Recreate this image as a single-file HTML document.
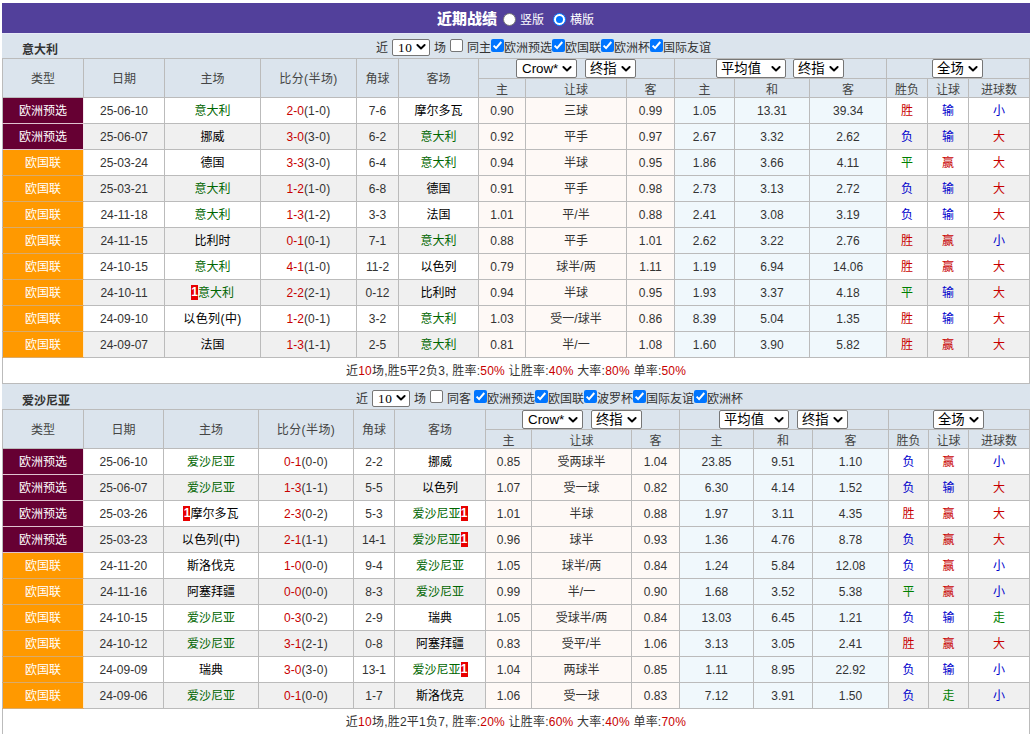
<!DOCTYPE html>
<html lang="zh-CN">
<head>
<meta charset="utf-8">
<title>近期战绩</title>
<style>
html,body{margin:0;padding:0;background:#fff;}
body{width:1032px;height:734px;overflow:hidden;font-family:"Liberation Sans","Noto Sans CJK SC",sans-serif;font-size:12px;color:#333;}
#wrap{position:absolute;left:2px;top:3px;width:1028px;}
.title{position:relative;height:30px;width:1028px;background:#52409b;color:#fff;}
.title .tt{position:absolute;left:435px;top:1px;line-height:30px;font-size:15px;font-weight:900;}
.title .rl{position:absolute;top:1px;line-height:32px;font-size:12px;}
.title .l1{left:518px;}
.title .l2{left:568px;}
.rd{position:absolute;top:10px;width:11px;height:11px;border:1px solid #767676;border-radius:50%;background:#fff;}
.rd.r1{left:501px;}
.rd.r2{left:551px;}
.rd.on{border-color:#0075ff;}
.rd.on:after{content:"";position:absolute;left:2px;top:2px;width:7px;height:7px;border-radius:50%;background:#0075ff;}
.team{position:relative;height:25px;width:1028px;background:#dbe4ed;}
.title + .team{box-shadow:inset 0 1px 0 #e6e9f7;}
.team .tn{position:absolute;left:20px;top:0;line-height:34px;font-size:12px;font-weight:bold;color:#333;}
.ctl{position:absolute;top:0;height:25px;white-space:nowrap;font-size:0;line-height:25px;}
.ctl>*{vertical-align:top;}
.ctl .tx,.ctl .lg{display:inline-block;font-size:12px;line-height:31px;color:#333;}
.ctl .lg{margin:0;}
.sel{display:inline-block;position:relative;box-sizing:border-box;height:19px;border:1px solid #767676;border-radius:2px;background:#fff;text-align:left;vertical-align:top;}
.sel .st{position:absolute;left:5px;top:0;line-height:17px;font-size:13.33px;color:#000;white-space:nowrap;}
.sel .ch{position:absolute;right:4px;top:6px;}
.ctl .sel{margin:6px 4px 0 4px;height:17px;}
.ctl .sel .st{font-family:"Liberation Serif","Noto Serif CJK SC",serif;line-height:15px;left:5px;letter-spacing:0.5px;}
.ctl .sel .ch{right:3px;top:4px;}
.cb{display:inline-block;box-sizing:border-box;width:13px;height:13px;border:1px solid #767676;border-radius:2px;background:#fff;margin-top:6px;position:relative;}
.cb.on{border:0;background:#0075ff;}
.cb svg{position:absolute;left:0;top:0;}
.ctl .cb.first{margin-left:4px;margin-right:4px;}
table{border-collapse:collapse;table-layout:fixed;width:1028px;margin:0;}
th,td{border:1px solid #bbb;padding:0;text-align:center;font-weight:normal;font-size:12px;overflow:hidden;white-space:nowrap;}
th{background:#dbe4ed;color:#444;}
th.bf{letter-spacing:0.4px;}
tr.h1{height:20px;}
tr.h1 th[rowspan]{padding-bottom:2px;}
tr.h2{height:19px;}
tr.h1 th.sc{font-size:0;line-height:0;vertical-align:top;text-align:left;}
tr.h1 th.sc .sel{margin-top:0;}


tr.a,tr.z,tr.su{height:26px;}
td{line-height:23px;height:23px;padding-top:2px;}
tr.a td{background:#fff;}
tr.z td{background:#f0f0f0;}
tr td.hc{background:#fef9f6;}
tr td.av{background:#f0f8fc;}
tr td.ty{color:#fff;}
tr td.ty.m{background:#660033;border-right-color:#f3e6ec;border-bottom-color:#dfc3d0;}
tr td.ty.o{background:#ff9900;border-right-color:#fbe9d0;border-bottom-color:#d9ab6c;}
tr.su td{background:#fff;letter-spacing:0.23px;}
.g{color:#006600;}
.r,td.r{color:#c80000;}
.ht{letter-spacing:0.25px;}
td.b{color:#0000cc;}
td.g{color:#008000;}
i.rc{font-style:normal;font-weight:bold;color:#fff;background:#e80000;display:inline-block;line-height:15px;height:15px;width:7px;text-align:center;vertical-align:middle;margin-top:-3px;}
.pl{letter-spacing:0.4px;}
.sel.cj .st{left:4px;}
td.tm{color:#000;}

</style>
</head>
<body>
<div id="wrap">
<div class="title"><b class="tt">近期战绩</b><span class="rd r1"></span><span class="rl l1">竖版</span><span class="rd on r2"></span><span class="rl l2">横版</span></div>
<div class="team"><b class="tn">意大利</b><div class="ctl" style="left:374px">
<span class="tx">近</span><span class="sel s10" style="width:38px;margin-left:4px"><span class="st">10</span><svg class="ch" viewBox="0 0 10 6" width="10" height="6"><path d="M1.4 1 L5 4.5 L8.6 1" fill="none" stroke="#000" stroke-width="1.9" stroke-linecap="round" stroke-linejoin="round"/></svg></span><span class="tx">场</span><span class="cb first"></span><span class="tx sm">同主</span>
<span class="cb on"><svg viewBox="0 0 13 13" width="13" height="13"><path d="M2.6 6.6 L5.1 9.1 L10.3 3" fill="none" stroke="#fff" stroke-width="2" stroke-linecap="butt" stroke-linejoin="miter"/></svg></span><span class="lg">欧洲预选</span>
<span class="cb on"><svg viewBox="0 0 13 13" width="13" height="13"><path d="M2.6 6.6 L5.1 9.1 L10.3 3" fill="none" stroke="#fff" stroke-width="2" stroke-linecap="butt" stroke-linejoin="miter"/></svg></span><span class="lg">欧国联</span>
<span class="cb on"><svg viewBox="0 0 13 13" width="13" height="13"><path d="M2.6 6.6 L5.1 9.1 L10.3 3" fill="none" stroke="#fff" stroke-width="2" stroke-linecap="butt" stroke-linejoin="miter"/></svg></span><span class="lg">欧洲杯</span>
<span class="cb on"><svg viewBox="0 0 13 13" width="13" height="13"><path d="M2.6 6.6 L5.1 9.1 L10.3 3" fill="none" stroke="#fff" stroke-width="2" stroke-linecap="butt" stroke-linejoin="miter"/></svg></span><span class="lg">国际友谊</span>
</div></div>
<table class="t1"><colgroup><col style="width:81px"><col style="width:81px"><col style="width:96px"><col style="width:96px"><col style="width:42px"><col style="width:80px"><col style="width:47px"><col style="width:101px"><col style="width:48px"><col style="width:60px"><col style="width:75px"><col style="width:77px"><col style="width:41px"><col style="width:41px"><col style="width:61px"></colgroup>
<tr class="h1"><th rowspan="2">类型</th><th rowspan="2">日期</th><th rowspan="2">主场</th><th rowspan="2" class="bf">比分(半场)</th><th rowspan="2">角球</th><th rowspan="2">客场</th><th colspan="3" class="sc" style="padding-left:37px"><span class="sel " style="width:61px;margin-left:0px"><span class="st">Crow*</span><svg class="ch" viewBox="0 0 10 6" width="10" height="6"><path d="M1.4 1 L5 4.5 L8.6 1" fill="none" stroke="#000" stroke-width="1.9" stroke-linecap="round" stroke-linejoin="round"/></svg></span><span class="sel cj" style="width:51px;margin-left:8px"><span class="st">终指</span><svg class="ch" viewBox="0 0 10 6" width="10" height="6"><path d="M1.4 1 L5 4.5 L8.6 1" fill="none" stroke="#000" stroke-width="1.9" stroke-linecap="round" stroke-linejoin="round"/></svg></span></th><th colspan="3" class="sc" style="padding-left:41px"><span class="sel cj" style="width:70px;margin-left:0px"><span class="st">平均值</span><svg class="ch" viewBox="0 0 10 6" width="10" height="6"><path d="M1.4 1 L5 4.5 L8.6 1" fill="none" stroke="#000" stroke-width="1.9" stroke-linecap="round" stroke-linejoin="round"/></svg></span><span class="sel cj" style="width:51px;margin-left:7px"><span class="st">终指</span><svg class="ch" viewBox="0 0 10 6" width="10" height="6"><path d="M1.4 1 L5 4.5 L8.6 1" fill="none" stroke="#000" stroke-width="1.9" stroke-linecap="round" stroke-linejoin="round"/></svg></span></th><th colspan="3" class="sc" style="padding-left:45px"><span class="sel cj" style="width:51px;margin-left:0px"><span class="st">全场</span><svg class="ch" viewBox="0 0 10 6" width="10" height="6"><path d="M1.4 1 L5 4.5 L8.6 1" fill="none" stroke="#000" stroke-width="1.9" stroke-linecap="round" stroke-linejoin="round"/></svg></span></th></tr>
<tr class="h2"><th>主</th><th>让球</th><th>客</th><th>主</th><th>和</th><th>客</th><th>胜负</th><th>让球</th><th>进球数</th></tr>
<tr class="a"><td class="ty m">欧洲预选</td><td>25-06-10</td><td class="tm"><span class="g">意大利</span></td><td><span class="r">2-0</span><span class="ht">(1-0)</span></td><td>7-6</td><td class="tm">摩尔多瓦</td><td class="hc">0.90</td><td class="hc">三球</td><td class="hc">0.99</td><td class="av">1.05</td><td class="av">13.31</td><td class="av">39.34</td><td class="r">胜</td><td class="b">输</td><td class="b">小</td></tr>
<tr class="z"><td class="ty m">欧洲预选</td><td>25-06-07</td><td class="tm">挪威</td><td><span class="r">3-0</span><span class="ht">(3-0)</span></td><td>6-2</td><td class="tm"><span class="g">意大利</span></td><td class="hc">0.92</td><td class="hc">平手</td><td class="hc">0.97</td><td class="av">2.67</td><td class="av">3.32</td><td class="av">2.62</td><td class="b">负</td><td class="b">输</td><td class="r">大</td></tr>
<tr class="a"><td class="ty o">欧国联</td><td>25-03-24</td><td class="tm">德国</td><td><span class="r">3-3</span><span class="ht">(3-0)</span></td><td>6-4</td><td class="tm"><span class="g">意大利</span></td><td class="hc">0.94</td><td class="hc">半球</td><td class="hc">0.95</td><td class="av">1.86</td><td class="av">3.66</td><td class="av">4.11</td><td class="g">平</td><td class="r">赢</td><td class="r">大</td></tr>
<tr class="z"><td class="ty o">欧国联</td><td>25-03-21</td><td class="tm"><span class="g">意大利</span></td><td><span class="r">1-2</span><span class="ht">(1-0)</span></td><td>6-8</td><td class="tm">德国</td><td class="hc">0.91</td><td class="hc">平手</td><td class="hc">0.98</td><td class="av">2.73</td><td class="av">3.13</td><td class="av">2.72</td><td class="b">负</td><td class="b">输</td><td class="r">大</td></tr>
<tr class="a"><td class="ty o">欧国联</td><td>24-11-18</td><td class="tm"><span class="g">意大利</span></td><td><span class="r">1-3</span><span class="ht">(1-2)</span></td><td>3-3</td><td class="tm">法国</td><td class="hc">1.01</td><td class="hc">平/半</td><td class="hc">0.88</td><td class="av">2.41</td><td class="av">3.08</td><td class="av">3.19</td><td class="b">负</td><td class="b">输</td><td class="r">大</td></tr>
<tr class="z"><td class="ty o">欧国联</td><td>24-11-15</td><td class="tm">比利时</td><td><span class="r">0-1</span><span class="ht">(0-1)</span></td><td>7-1</td><td class="tm"><span class="g">意大利</span></td><td class="hc">0.88</td><td class="hc">平手</td><td class="hc">1.01</td><td class="av">2.62</td><td class="av">3.22</td><td class="av">2.76</td><td class="r">胜</td><td class="r">赢</td><td class="b">小</td></tr>
<tr class="a"><td class="ty o">欧国联</td><td>24-10-15</td><td class="tm"><span class="g">意大利</span></td><td><span class="r">4-1</span><span class="ht">(1-0)</span></td><td>11-2</td><td class="tm">以色列</td><td class="hc">0.79</td><td class="hc">球半/两</td><td class="hc">1.11</td><td class="av">1.19</td><td class="av">6.94</td><td class="av">14.06</td><td class="r">胜</td><td class="r">赢</td><td class="r">大</td></tr>
<tr class="z"><td class="ty o">欧国联</td><td>24-10-11</td><td class="tm"><i class="rc">1</i><span class="g">意大利</span></td><td><span class="r">2-2</span><span class="ht">(2-1)</span></td><td>0-12</td><td class="tm">比利时</td><td class="hc">0.94</td><td class="hc">半球</td><td class="hc">0.95</td><td class="av">1.93</td><td class="av">3.37</td><td class="av">4.18</td><td class="g">平</td><td class="b">输</td><td class="r">大</td></tr>
<tr class="a"><td class="ty o">欧国联</td><td>24-09-10</td><td class="tm"><span class="pl">以色列(中)</span></td><td><span class="r">1-2</span><span class="ht">(0-1)</span></td><td>3-2</td><td class="tm"><span class="g">意大利</span></td><td class="hc">1.03</td><td class="hc">受一/球半</td><td class="hc">0.86</td><td class="av">8.39</td><td class="av">5.04</td><td class="av">1.35</td><td class="r">胜</td><td class="b">输</td><td class="r">大</td></tr>
<tr class="z"><td class="ty o">欧国联</td><td>24-09-07</td><td class="tm">法国</td><td><span class="r">1-3</span><span class="ht">(1-1)</span></td><td>2-5</td><td class="tm"><span class="g">意大利</span></td><td class="hc">0.81</td><td class="hc">半/一</td><td class="hc">1.08</td><td class="av">1.60</td><td class="av">3.90</td><td class="av">5.82</td><td class="r">胜</td><td class="r">赢</td><td class="r">大</td></tr>
<tr class="su"><td colspan="15">近<span class="r">10</span>场,胜5平2负3, 胜率:<span class="r">50%</span> 让胜率:<span class="r">40%</span> 大率:<span class="r">80%</span> 单率:<span class="r">50%</span></td></tr>
</table>
<div class="team"><b class="tn">爱沙尼亚</b><div class="ctl" style="left:354px">
<span class="tx">近</span><span class="sel s10" style="width:38px;margin-left:4px"><span class="st">10</span><svg class="ch" viewBox="0 0 10 6" width="10" height="6"><path d="M1.4 1 L5 4.5 L8.6 1" fill="none" stroke="#000" stroke-width="1.9" stroke-linecap="round" stroke-linejoin="round"/></svg></span><span class="tx">场</span><span class="cb first"></span><span class="tx sm">同客</span>
<span class="sp" style="display:inline-block;width:3px"></span><span class="cb on"><svg viewBox="0 0 13 13" width="13" height="13"><path d="M2.6 6.6 L5.1 9.1 L10.3 3" fill="none" stroke="#fff" stroke-width="2" stroke-linecap="butt" stroke-linejoin="miter"/></svg></span><span class="lg">欧洲预选</span>
<span class="cb on"><svg viewBox="0 0 13 13" width="13" height="13"><path d="M2.6 6.6 L5.1 9.1 L10.3 3" fill="none" stroke="#fff" stroke-width="2" stroke-linecap="butt" stroke-linejoin="miter"/></svg></span><span class="lg">欧国联</span>
<span class="cb on"><svg viewBox="0 0 13 13" width="13" height="13"><path d="M2.6 6.6 L5.1 9.1 L10.3 3" fill="none" stroke="#fff" stroke-width="2" stroke-linecap="butt" stroke-linejoin="miter"/></svg></span><span class="lg">波罗杯</span>
<span class="cb on"><svg viewBox="0 0 13 13" width="13" height="13"><path d="M2.6 6.6 L5.1 9.1 L10.3 3" fill="none" stroke="#fff" stroke-width="2" stroke-linecap="butt" stroke-linejoin="miter"/></svg></span><span class="lg">国际友谊</span>
<span class="cb on"><svg viewBox="0 0 13 13" width="13" height="13"><path d="M2.6 6.6 L5.1 9.1 L10.3 3" fill="none" stroke="#fff" stroke-width="2" stroke-linecap="butt" stroke-linejoin="miter"/></svg></span><span class="lg">欧洲杯</span>
</div></div>
<table class="t2"><colgroup><col style="width:81px"><col style="width:80px"><col style="width:95px"><col style="width:95px"><col style="width:41px"><col style="width:91px"><col style="width:46px"><col style="width:100px"><col style="width:48px"><col style="width:74px"><col style="width:59px"><col style="width:76px"><col style="width:40px"><col style="width:40px"><col style="width:61px"></colgroup>
<tr class="h1"><th rowspan="2">类型</th><th rowspan="2">日期</th><th rowspan="2">主场</th><th rowspan="2" class="bf">比分(半场)</th><th rowspan="2">角球</th><th rowspan="2">客场</th><th colspan="3" class="sc" style="padding-left:36px"><span class="sel " style="width:61px;margin-left:0px"><span class="st">Crow*</span><svg class="ch" viewBox="0 0 10 6" width="10" height="6"><path d="M1.4 1 L5 4.5 L8.6 1" fill="none" stroke="#000" stroke-width="1.9" stroke-linecap="round" stroke-linejoin="round"/></svg></span><span class="sel cj" style="width:51px;margin-left:8px"><span class="st">终指</span><svg class="ch" viewBox="0 0 10 6" width="10" height="6"><path d="M1.4 1 L5 4.5 L8.6 1" fill="none" stroke="#000" stroke-width="1.9" stroke-linecap="round" stroke-linejoin="round"/></svg></span></th><th colspan="3" class="sc" style="padding-left:39px"><span class="sel cj" style="width:70px;margin-left:0px"><span class="st">平均值</span><svg class="ch" viewBox="0 0 10 6" width="10" height="6"><path d="M1.4 1 L5 4.5 L8.6 1" fill="none" stroke="#000" stroke-width="1.9" stroke-linecap="round" stroke-linejoin="round"/></svg></span><span class="sel cj" style="width:51px;margin-left:8px"><span class="st">终指</span><svg class="ch" viewBox="0 0 10 6" width="10" height="6"><path d="M1.4 1 L5 4.5 L8.6 1" fill="none" stroke="#000" stroke-width="1.9" stroke-linecap="round" stroke-linejoin="round"/></svg></span></th><th colspan="3" class="sc" style="padding-left:44px"><span class="sel cj" style="width:51px;margin-left:0px"><span class="st">全场</span><svg class="ch" viewBox="0 0 10 6" width="10" height="6"><path d="M1.4 1 L5 4.5 L8.6 1" fill="none" stroke="#000" stroke-width="1.9" stroke-linecap="round" stroke-linejoin="round"/></svg></span></th></tr>
<tr class="h2"><th>主</th><th>让球</th><th>客</th><th>主</th><th>和</th><th>客</th><th>胜负</th><th>让球</th><th>进球数</th></tr>
<tr class="a"><td class="ty m">欧洲预选</td><td>25-06-10</td><td class="tm"><span class="g">爱沙尼亚</span></td><td><span class="r">0-1</span><span class="ht">(0-0)</span></td><td>2-2</td><td class="tm">挪威</td><td class="hc">0.85</td><td class="hc">受两球半</td><td class="hc">1.04</td><td class="av">23.85</td><td class="av">9.51</td><td class="av">1.10</td><td class="b">负</td><td class="r">赢</td><td class="b">小</td></tr>
<tr class="z"><td class="ty m">欧洲预选</td><td>25-06-07</td><td class="tm"><span class="g">爱沙尼亚</span></td><td><span class="r">1-3</span><span class="ht">(1-1)</span></td><td>5-5</td><td class="tm">以色列</td><td class="hc">1.07</td><td class="hc">受一球</td><td class="hc">0.82</td><td class="av">6.30</td><td class="av">4.14</td><td class="av">1.52</td><td class="b">负</td><td class="b">输</td><td class="r">大</td></tr>
<tr class="a"><td class="ty m">欧洲预选</td><td>25-03-26</td><td class="tm"><i class="rc">1</i>摩尔多瓦</td><td><span class="r">2-3</span><span class="ht">(0-2)</span></td><td>5-3</td><td class="tm"><span class="g">爱沙尼亚</span><i class="rc">1</i></td><td class="hc">1.01</td><td class="hc">半球</td><td class="hc">0.88</td><td class="av">1.97</td><td class="av">3.11</td><td class="av">4.35</td><td class="r">胜</td><td class="r">赢</td><td class="r">大</td></tr>
<tr class="z"><td class="ty m">欧洲预选</td><td>25-03-23</td><td class="tm"><span class="pl">以色列(中)</span></td><td><span class="r">2-1</span><span class="ht">(1-1)</span></td><td>14-1</td><td class="tm"><span class="g">爱沙尼亚</span><i class="rc">1</i></td><td class="hc">0.96</td><td class="hc">球半</td><td class="hc">0.93</td><td class="av">1.36</td><td class="av">4.76</td><td class="av">8.78</td><td class="b">负</td><td class="r">赢</td><td class="r">大</td></tr>
<tr class="a"><td class="ty o">欧国联</td><td>24-11-20</td><td class="tm">斯洛伐克</td><td><span class="r">1-0</span><span class="ht">(0-0)</span></td><td>9-4</td><td class="tm"><span class="g">爱沙尼亚</span></td><td class="hc">1.05</td><td class="hc">球半/两</td><td class="hc">0.84</td><td class="av">1.24</td><td class="av">5.84</td><td class="av">12.08</td><td class="b">负</td><td class="r">赢</td><td class="b">小</td></tr>
<tr class="z"><td class="ty o">欧国联</td><td>24-11-16</td><td class="tm">阿塞拜疆</td><td><span class="r">0-0</span><span class="ht">(0-0)</span></td><td>8-3</td><td class="tm"><span class="g">爱沙尼亚</span></td><td class="hc">0.99</td><td class="hc">半/一</td><td class="hc">0.90</td><td class="av">1.68</td><td class="av">3.52</td><td class="av">5.38</td><td class="g">平</td><td class="r">赢</td><td class="b">小</td></tr>
<tr class="a"><td class="ty o">欧国联</td><td>24-10-15</td><td class="tm"><span class="g">爱沙尼亚</span></td><td><span class="r">0-3</span><span class="ht">(0-2)</span></td><td>2-9</td><td class="tm">瑞典</td><td class="hc">1.05</td><td class="hc">受球半/两</td><td class="hc">0.84</td><td class="av">13.03</td><td class="av">6.45</td><td class="av">1.21</td><td class="b">负</td><td class="b">输</td><td class="g">走</td></tr>
<tr class="z"><td class="ty o">欧国联</td><td>24-10-12</td><td class="tm"><span class="g">爱沙尼亚</span></td><td><span class="r">3-1</span><span class="ht">(2-1)</span></td><td>0-8</td><td class="tm">阿塞拜疆</td><td class="hc">0.83</td><td class="hc">受平/半</td><td class="hc">1.06</td><td class="av">3.13</td><td class="av">3.05</td><td class="av">2.41</td><td class="r">胜</td><td class="r">赢</td><td class="r">大</td></tr>
<tr class="a"><td class="ty o">欧国联</td><td>24-09-09</td><td class="tm">瑞典</td><td><span class="r">3-0</span><span class="ht">(3-0)</span></td><td>13-1</td><td class="tm"><span class="g">爱沙尼亚</span><i class="rc">1</i></td><td class="hc">1.04</td><td class="hc">两球半</td><td class="hc">0.85</td><td class="av">1.11</td><td class="av">8.95</td><td class="av">22.92</td><td class="b">负</td><td class="b">输</td><td class="b">小</td></tr>
<tr class="z"><td class="ty o">欧国联</td><td>24-09-06</td><td class="tm"><span class="g">爱沙尼亚</span></td><td><span class="r">0-1</span><span class="ht">(0-0)</span></td><td>1-7</td><td class="tm">斯洛伐克</td><td class="hc">1.06</td><td class="hc">受一球</td><td class="hc">0.83</td><td class="av">7.12</td><td class="av">3.91</td><td class="av">1.50</td><td class="b">负</td><td class="g">走</td><td class="b">小</td></tr>
<tr class="su"><td colspan="15">近<span class="r">10</span>场,胜2平1负7, 胜率:<span class="r">20%</span> 让胜率:<span class="r">60%</span> 大率:<span class="r">40%</span> 单率:<span class="r">70%</span></td></tr>
</table>
</div>
</body>
</html>
